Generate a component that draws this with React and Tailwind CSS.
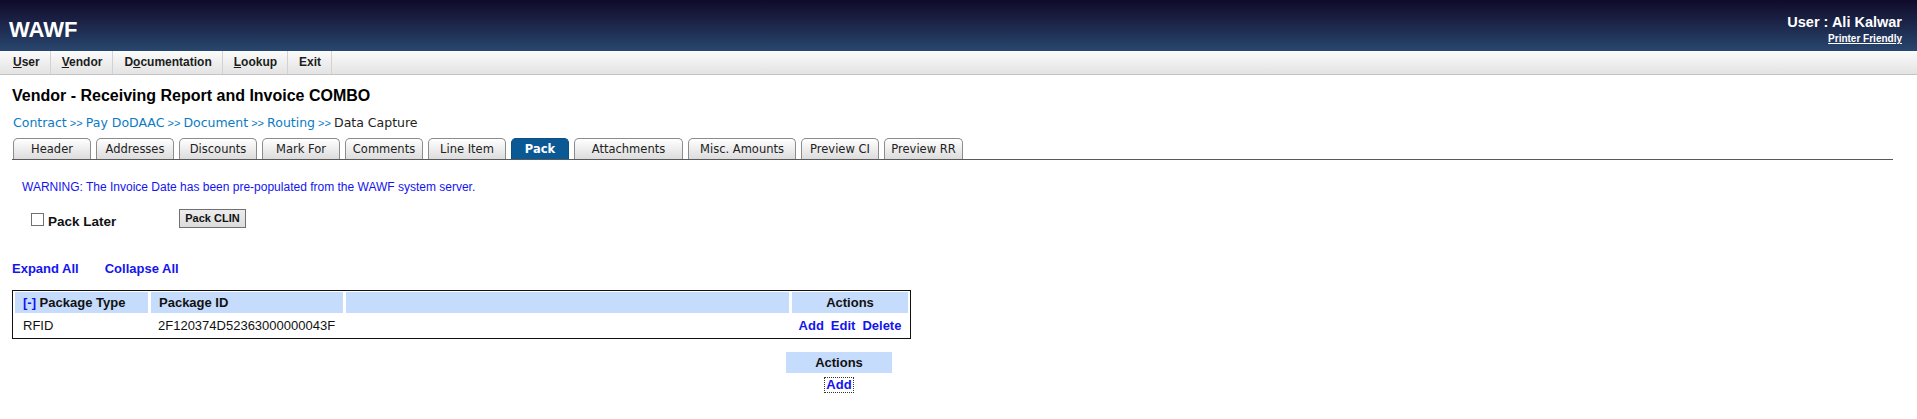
import React from 'react';

const menuItems = [
  { pre: '', key: 'U', post: 'ser' },
  { pre: '', key: 'V', post: 'endor' },
  { pre: 'D', key: 'o', post: 'cumentation' },
  { pre: '', key: 'L', post: 'ookup' },
  { pre: 'E', key: '', post: 'xit' },
];

const tabs = [
  { label: 'Header', w: 'w-[78px]' },
  { label: 'Addresses', w: 'w-[78px]' },
  { label: 'Discounts', w: 'w-[78px]' },
  { label: 'Mark For', w: 'w-[78px]' },
  { label: 'Comments', w: 'w-[78px]' },
  { label: 'Line Item', w: 'w-[78px]' },
  { label: 'Pack', w: 'w-[58px]', active: true },
  { label: 'Attachments', w: 'w-[109px]' },
  { label: 'Misc. Amounts', w: 'w-[108px]' },
  { label: 'Preview CI', w: 'w-[78px]' },
  { label: 'Preview RR', w: 'w-[79px]' },
];

const crumbs = ['Contract', 'Pay DoDAAC', 'Document', 'Routing'];

export default function App() {
  return (
    <div className="min-h-[419px] bg-white font-['Liberation_Sans',Arial,sans-serif] text-[#111]">
      {/* Top banner */}
      <header className="h-[51px] flex justify-between pl-[9px] pr-[15px] bg-gradient-to-b from-[#100a2a] to-[#28476f]">
        <div className="pt-[19px] text-[22px] leading-none font-bold text-white">WAWF</div>
        <div className="flex flex-col items-end pt-[14px]">
          <div className="text-[14.5px] leading-[16px] font-bold text-white">User : Ali Kalwar</div>
          <a href="#" className="mt-[3px] text-[10px] leading-[12px] font-bold text-white underline">
            Printer Friendly
          </a>
        </div>
      </header>

      {/* Menu bar */}
      <nav className="h-[24px] flex border-b border-[#c4c4c4] bg-gradient-to-b from-[#fbfbfb] to-[#e3e3e3]">
        {menuItems.map((m, i) => (
          <div
            key={i}
            className={`${i === 0 ? 'pl-[13px]' : 'pl-[11px]'} pr-[10px] border-r border-[#d2d2d2] text-[12px] leading-[23px] font-bold text-[#1c1c1c]`}
          >
            {m.pre}
            {m.key && <span className="underline">{m.key}</span>}
            {m.post}
          </div>
        ))}
      </nav>

      {/* Title */}
      <h1 className="mt-[12px] ml-[12px] text-[16px] leading-[18px] font-bold text-black">
        Vendor - Receiving Report and Invoice COMBO
      </h1>

      {/* Breadcrumb */}
      <div className="mt-[10px] ml-[13px] text-[12.5px] leading-[15px] font-['DejaVu_Sans',Verdana,sans-serif]">
        {crumbs.map((c) => (
          <span key={c}>
            <a href="#" className="text-[#0a7bc4]">{c}</a>
            <span className="text-[#0a7bc4] text-[11px] font-['Liberation_Sans',Arial,sans-serif]"> &gt;&gt; </span>
          </span>
        ))}
        <span className="text-[#222]">Data Capture</span>
      </div>

      {/* Tabs */}
      <div className="mt-[7px] ml-[12px] mr-[24px] pl-[1px] flex items-end gap-[5px] border-b border-[#5a5a5a]">
        {tabs.map((t) =>
          t.active ? (
            <div
              key={t.label}
              className={`${t.w} h-[21px] pt-[1px] flex items-center justify-center rounded-t-[5px] border border-b-0 border-[#0a4f85] bg-[#0a5894] text-[11.5px] font-bold text-white font-['DejaVu_Sans',Verdana,sans-serif]`}
            >
              {t.label}
            </div>
          ) : (
            <div
              key={t.label}
              className={`${t.w} h-[21px] pt-[1px] flex items-center justify-center rounded-t-[5px] border border-b-0 border-[#8c8c8c] bg-gradient-to-b from-white to-[#dcdcdc] text-[11.5px] text-[#222] font-['DejaVu_Sans',Verdana,sans-serif]`}
            >
              {t.label}
            </div>
          )
        )}
      </div>

      {/* Warning */}
      <p className="mt-[20px] ml-[22px] text-[12px] leading-[14px] text-[#1414ee]">
        WARNING: The Invoice Date has been pre-populated from the WAWF system server.
      </p>

      {/* Pack later / Pack CLIN */}
      <div className="mt-[15px] ml-[31px] flex items-start">
        <div className="w-[148px] flex items-start">
          <span className="mt-[4px] w-[13px] h-[13px] border border-[#707070] bg-white" />
          <span className="mt-[5px] ml-[4px] text-[13.5px] leading-[16px] font-bold text-[#111]">Pack Later</span>
        </div>
        <button className="w-[67px] h-[19px] border border-[#707070] bg-gradient-to-b from-[#ececec] to-[#dcdcdc] text-[11px] leading-[17px] font-bold text-[#111]">
          Pack CLIN
        </button>
      </div>

      {/* Expand / Collapse */}
      <div className="mt-[31px] ml-[12px] flex gap-[26px] text-[13px] leading-[15px] font-bold text-[#1414ee]">
        <a href="#">Expand All</a>
        <a href="#">Collapse All</a>
      </div>

      {/* Package table */}
      <div className="mt-[14px] ml-[12px] w-[899px] border border-[#111] p-[1px] px-[2px]">
        <div className="grid grid-cols-[133px_192px_443px_116px] gap-x-[3px] text-[13px]">
          <div className="h-[21px] leading-[21px] pl-[8px] bg-[#c6dcfc] font-bold">
            <span className="text-[#1414ee]">[-]</span> Package Type
          </div>
          <div className="h-[21px] leading-[21px] pl-[8px] bg-[#c6dcfc] font-bold">Package ID</div>
          <div className="h-[21px] bg-[#c6dcfc]" />
          <div className="h-[21px] leading-[21px] text-center bg-[#c6dcfc] font-bold">Actions</div>

          <div className="h-[24px] pt-[2px] leading-[22px] pl-[8px]">RFID</div>
          <div className="h-[24px] pt-[2px] leading-[22px] pl-[7px]">2F120374D52363000000043F</div>
          <div className="h-[24px]" />
          <div className="h-[24px] pt-[2px] leading-[22px] flex justify-center gap-[7px] font-bold text-[#1414ee]">
            <a href="#">Add</a>
            <a href="#">Edit</a>
            <a href="#">Delete</a>
          </div>
        </div>
      </div>

      {/* Trailing actions */}
      <div className="mt-[13px] ml-[786px] w-[106px] flex flex-col items-center text-[13px]">
        <div className="w-full h-[21px] leading-[21px] text-center bg-[#c6dcfc] font-bold">Actions</div>
        <a href="#" className="mt-[4px] px-[1px] border border-dotted border-[#333] leading-[14px] font-bold text-[#1414ee]">
          Add
        </a>
      </div>
    </div>
  );
}
